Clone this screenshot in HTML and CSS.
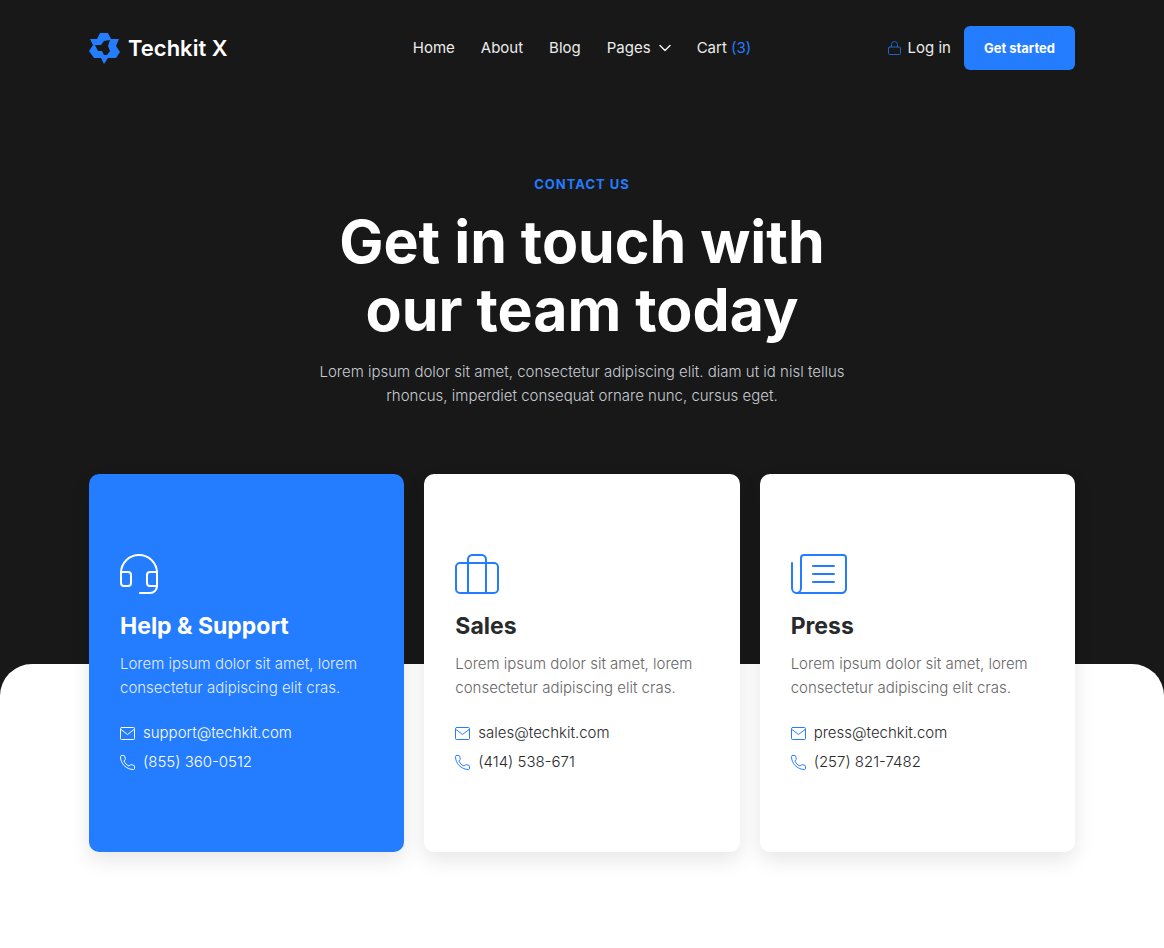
FILE: index.html
```html
<!DOCTYPE html>
<html lang="en">
<head>
    <meta charset="UTF-8">
    <meta name="viewport" content="width=device-width, initial-scale=1.0">
    <title>Techkit X - Contact us</title>
    <link rel="stylesheet" href="styles.css">
</head>
<body>

<!-- Shared icons -->
<svg class="sprite" aria-hidden="true">
    <symbol id="icon-mail" viewBox="0 0 15 15">
        <rect x="0.5" y="1.5" width="14" height="12" rx="1"/>
        <path d="M1 3.500l6.500 5L14 3.500"/>
    </symbol>
    <symbol id="icon-phone" viewBox="0 0 15 15">
        <path d="M1.500.500h2.300c.5 0 .8.300.9.800l.6 2.500c.1.400 0 .7-.3 1L3.900 6c1 2.300 2.700 4 5.100 5.100l1.200-1.100c.3-.3.600-.4 1-.3l2.500.600c.5.100.8.400.8.900v2.300c0 .600-.4 1-1 1C6.300 14.500.500 8.700.500 1.500c0-.6.400-1 1-1z"/>
    </symbol>
</svg>

<header class="header container">
    <a href="#" class="logo">
        <svg class="logo-mark" width="31" height="31" viewBox="0 0 31 31" aria-hidden="true">
            <path fill-rule="evenodd" d="M11 0h8l3 6h8l-3 7 4 6-4 6h-8l-4 6-3-6H5l-5-7 4-6-3-6h7zM6 12l3 6h4l2 4h3l3-4-2-5 2-6-6 1-3 4z"/>
        </svg>
        Techkit X
    </a>
    <nav class="nav">
        <a href="#">Home</a>
        <a href="#">About</a>
        <a href="#">Blog</a>
        <a href="#" class="nav-pages">Pages
            <svg width="12" height="8" viewBox="0 0 12 8" aria-hidden="true"><path d="M1 1.500l5 5 5-5"/></svg>
        </a>
        <a href="#">Cart <span class="cart-count">(3)</span></a>
    </nav>
    <div class="header-actions">
        <a href="#" class="login">
            <svg width="13" height="14" viewBox="0 0 13 14" aria-hidden="true">
                <rect x="0.5" y="6" width="12" height="7.500" rx="1"/>
                <path d="M3.500 6V3.500a3 3 0 0 1 6 0V6"/>
            </svg>
            Log in
        </a>
        <button type="button" class="btn">Get started</button>
    </div>
</header>

<section class="hero container">
    <p class="eyebrow">Contact us</p>
    <h1>Get in touch with<br>our team today</h1>
    <p class="lead">Lorem ipsum dolor sit amet, consectetur adipiscing elit. diam ut id nisl tellus<br>rhoncus, imperdiet consequat ornare nunc, cursus eget.</p>
</section>

<main class="contact">
    <div class="container cards">
        <article class="card card-primary">
            <svg class="card-icon" width="38" height="40" viewBox="0 0 38 40" aria-hidden="true">
                <path d="M1 19C1 9 9 1 19 1s18 8 18 18v13c0 4-3 7-7 7H20"/>
                <path d="M1 18h7c2 0 3 1 3 3v8c0 2-1 3-3 3H4c-2 0-3-1-3-3V18zM37 18h-7c-2 0-3 1-3 3v8c0 2 1 3 3 3h7"/>
            </svg>
            <h2>Help &amp; Support</h2>
            <p>Lorem ipsum dolor sit amet, lorem consectetur adipiscing elit cras.</p>
            <ul>
                <li><a href="mailto:support@techkit.com"><svg class="icon"><use href="#icon-mail"/></svg>support@techkit.com</a></li>
                <li><a href="tel:8553600512"><svg class="icon"><use href="#icon-phone"/></svg>(855) 360-0512</a></li>
            </ul>
        </article>

        <article class="card">
            <svg class="card-icon" width="44" height="40" viewBox="0 0 44 40" aria-hidden="true">
                <rect x="1" y="9" width="42" height="30" rx="4"/>
                <path d="M13 39V5c0-2 2-4 4-4h10c2 0 4 2 4 4v34"/>
            </svg>
            <h2>Sales</h2>
            <p>Lorem ipsum dolor sit amet, lorem consectetur adipiscing elit cras.</p>
            <ul>
                <li><a href="mailto:sales@techkit.com"><svg class="icon"><use href="#icon-mail"/></svg>sales@techkit.com</a></li>
                <li><a href="tel:414538671"><svg class="icon"><use href="#icon-phone"/></svg>(414) 538-671</a></li>
            </ul>
        </article>

        <article class="card">
            <svg class="card-icon" width="56" height="40" viewBox="0 0 56 40" aria-hidden="true">
                <path d="M1 9v25c0 3 2 5 4.500 5S10 37 10 34V4c0-2 1-3 3-3h39c2 0 3 1 3 3v31c0 2-2 4-4 4H5"/>
                <path d="M22 12h21M22 20h21M22 28h21"/>
            </svg>
            <h2>Press</h2>
            <p>Lorem ipsum dolor sit amet, lorem consectetur adipiscing elit cras.</p>
            <ul>
                <li><a href="mailto:press@techkit.com"><svg class="icon"><use href="#icon-mail"/></svg>press@techkit.com</a></li>
                <li><a href="tel:2578217482"><svg class="icon"><use href="#icon-phone"/></svg>(257) 821-7482</a></li>
            </ul>
        </article>
    </div>
</main>

</body>
</html>
```
FILE: styles.css
```css
* {
    box-sizing: border-box;
}
body {
    display: flex;
    flex-direction: column;
    min-height: 100vh;
    margin: 0;
    font-family: Inter, sans-serif;
    font-size: 15px;
    line-height: 24px;
    color: #fff;
    background-color: #181818;
}
h1, h2, p, ul {
    margin: 0;
    padding: 0;
}
a {
    color: inherit;
    text-decoration: none;
}
svg {
    flex-shrink: 0;
    fill: none;
    stroke: currentColor;
    stroke-linecap: round;
    stroke-linejoin: round;
}
.sprite {
    position: absolute;
    width: 0;
    height: 0;
}
.container {
    width: 100%;
    max-width: 1026px;
    margin: 0 auto;
    padding: 0 20px;
}

/* Header */
.header {
    display: grid;
    grid-template-columns: 1fr auto 1fr;
    align-items: center;
    padding-top: 26px;
}
.logo {
    display: flex;
    align-items: center;
    gap: 8px;
    font-size: 22px;
    font-weight: 600;
}
.logo-mark {
    fill: #247cff;
    stroke: none;
}
.nav {
    display: flex;
    gap: 26px;
    color: #ececec;
}
.nav-pages {
    display: flex;
    align-items: center;
    gap: 8px;
}
.nav-pages svg {
    stroke-width: 1.5;
}
.cart-count {
    color: #247cff;
}
.header-actions {
    display: flex;
    align-items: center;
    justify-content: flex-end;
    gap: 13px;
}
.login {
    display: flex;
    align-items: center;
    gap: 6px;
    color: #ececec;
}
.login svg {
    color: #1f62c8;
}
.btn {
    height: 44px;
    padding: 0 20px;
    border: none;
    border-radius: 6px;
    font-family: inherit;
    font-size: 13px;
    font-weight: 700;
    color: #fff;
    background-color: #247cff;
    cursor: pointer;
}

/* Hero */
.hero {
    padding-top: 102px;
    padding-bottom: 256px;
    text-align: center;
}
.eyebrow {
    font-size: 13px;
    font-weight: 700;
    letter-spacing: 1px;
    text-transform: uppercase;
    color: #247cff;
}
.hero h1 {
    margin: 12px 0 16px;
    font-size: 59px;
    line-height: 68px;
    font-weight: 700;
}
.lead {
    font-weight: 300;
    color: #c6ccd2;
}

/* Contact cards */
.contact {
    display: flow-root;
    flex: 1;
    padding-bottom: 80px;
    border-radius: 32px 32px 0 0;
    background-color: #fff;
}
.cards {
    display: grid;
    grid-template-columns: repeat(3, 1fr);
    gap: 20px;
    margin-top: -190px;
}
.card {
    padding: 80px 31px 78px;
    border-radius: 10px;
    color: #282a2b;
    background-color: #fff;
    box-shadow: 0 8px 20px rgba(20, 20, 20, 0.1);
}
.card-icon {
    display: block;
    stroke-width: 2;
    color: #247cff;
}
.card h2 {
    margin: 16px 0 10px;
    font-size: 23px;
    line-height: 32px;
    font-weight: 700;
}
.card p {
    font-weight: 300;
    color: #666;
}
.card ul {
    display: grid;
    gap: 5px;
    margin-top: 21px;
    list-style: none;
}
.card li a {
    display: flex;
    align-items: center;
    gap: 8px;
    font-weight: 300;
}
.icon {
    width: 15px;
    height: 15px;
    color: #247cff;
}
.card-primary {
    color: #fff;
    background-color: #247cff;
}
.card-primary p {
    color: #e2edff;
}
.card-primary .card-icon,
.card-primary .icon {
    color: #fff;
}
```
